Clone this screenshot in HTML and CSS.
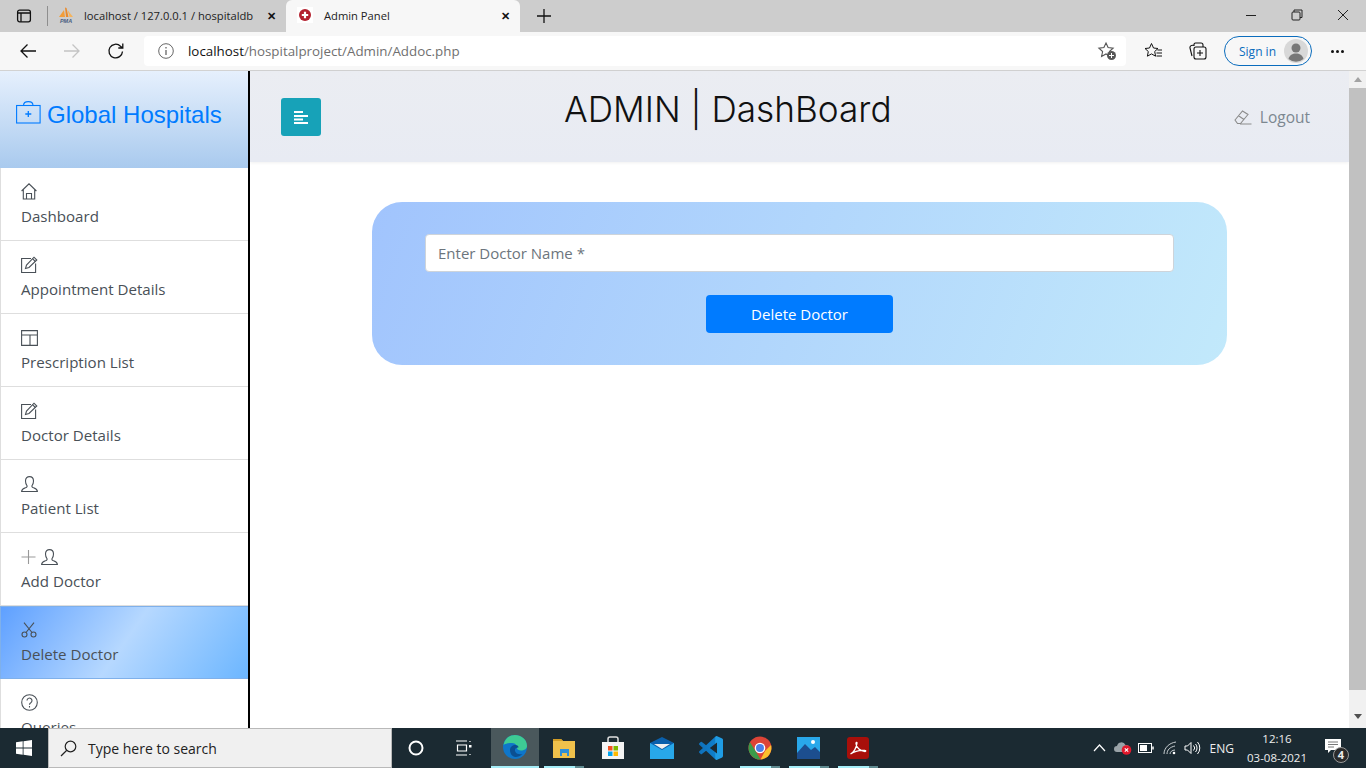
FILE: index.html
```html
<!DOCTYPE html>
<html lang="en">
<head>
    <meta charset="UTF-8">
    <title>Admin Panel</title>
    <link rel="stylesheet" href="styles.css">
</head>
<body>
    <!-- browser chrome -->
    <div class="tabstrip">
        <div class="tab-tool">
            <svg width="16" height="16" viewBox="0 0 16 16" fill="none" stroke="#111" stroke-width="1.3"><rect x="1.6" y="2.2" width="12.8" height="11.6" rx="2"/><path d="M1.6 5h12.8M5 5v8.8" /></svg>
        </div>
        <div class="tab-sep"></div>
        <div class="tab">
            <svg class="tab-icon" width="16" height="16" viewBox="0 0 16 16"><path d="M1 10 L6 3 L7 10z" fill="#f29d38"/><path d="M7 0.500 L8 10 L10.500 10 L8.500 1z" fill="#e98a2b"/><path d="M9.500 3 L15 10 L11.500 10z" fill="#f5b45c"/><text x="8" y="15.500" class="pma-mark">PMA</text></svg>
            <span class="tab-title">localhost / 127.0.0.1 / hospitaldb</span>
            <span class="tab-close">&#10005;</span>
        </div>
        <div class="tab tab-active">
            <svg class="tab-icon" width="16" height="16" viewBox="0 0 16 16"><rect width="16" height="16" fill="#fff"/><circle cx="8" cy="8" r="6" fill="#b3202f"/><path d="M8 4.800v6.400M4.800 8h6.400" stroke="#fff" stroke-width="2.200"/></svg>
            <span class="tab-title">Admin Panel</span>
            <span class="tab-close">&#10005;</span>
        </div>
        <div class="new-tab">
            <svg width="16" height="16" viewBox="0 0 16 16" stroke="#111" stroke-width="1.3"><path d="M8 1v14M1 8h14"/></svg>
        </div>
        <div class="win-controls">
            <div class="win-btn"><svg width="12" height="12" viewBox="0 0 12 12" stroke="#222"><path d="M1 6.500h10"/></svg></div>
            <div class="win-btn"><svg width="12" height="12" viewBox="0 0 12 12" fill="none" stroke="#222"><path d="M3 3V1h8v7.500H9"/><rect x="1" y="3" width="8" height="8" rx="1"/></svg></div>
            <div class="win-btn"><svg width="12" height="12" viewBox="0 0 12 12" stroke="#222"><path d="M1 1l10 10M11 1L1 11"/></svg></div>
        </div>
    </div>

    <div class="toolbar">
        <div class="nav-btn"><svg width="18" height="18" viewBox="0 0 18 18" fill="none" stroke="#111" stroke-width="1.3"><path d="M17 9H2M8.500 2.500L2 9l6.500 6.500"/></svg></div>
        <div class="nav-btn"><svg width="18" height="18" viewBox="0 0 18 18" fill="none" stroke="#c4c4c4" stroke-width="1.3"><path d="M1 9h15M9.500 2.500L16 9l-6.500 6.500"/></svg></div>
        <div class="nav-btn"><svg width="18" height="18" viewBox="0 0 18 18" fill="none" stroke="#111" stroke-width="1.3"><path d="M15.500 9.500a6.800 6.800 0 1 1-2-5.300L15.500 6M15.800 1.500V6h-4.500"/></svg></div>
        <div class="address">
            <svg width="16" height="16" viewBox="0 0 16 16" fill="none" stroke="#666"><circle cx="8" cy="8" r="7.300"/><path d="M8 7v5M8 4v1.500" stroke-width="1.3"/></svg>
            <span class="url"><span class="url-host">localhost</span>/hospitalproject/Admin/Addoc.php</span>
            <svg class="addr-star" width="20" height="20" viewBox="0 0 20 20"><path d="M9 2l2.100 4.600 5 .6-3.700 3.300 1 4.900L9 13l-4.400 2.400 1-4.900L1.900 7.200l5-.6z" fill="none" stroke="#555" stroke-width="1.100"/><circle cx="14.500" cy="14.500" r="4.500" fill="#555"/><path d="M14.500 12v5M12 14.500h5" stroke="#fff"/></svg>
        </div>
        <div class="tool-icons">
            <svg width="20" height="20" viewBox="0 0 20 20" fill="none" stroke="#111"><path d="M7.500 2.500l2 4.500 4.500.5-3.300 3 .9 4.700-4.100-2.300-4.100 2.300.9-4.700L1 7.500 5.500 7z"/><path d="M13.500 9h4.500M12.500 12h5.500M12.500 15h5.500"/></svg>
            <svg width="20" height="20" viewBox="0 0 20 20" fill="none" stroke="#111" stroke-width="1.100"><path d="M6 5V3.500A1.500 1.500 0 0 1 7.500 2H13a2 2 0 0 1 2 2v2M4 15l-2-8A2 2 0 0 1 3.500 4.500L6 4"/><rect x="6" y="6" width="12" height="12" rx="2"/><path d="M12 9v6M9 12h6"/></svg>
        </div>
        <div class="signin">
            <span>Sign in</span>
            <svg width="24" height="24" viewBox="0 0 24 24"><circle cx="12" cy="12" r="12" fill="#d8d8d8"/><circle cx="12" cy="9" r="4.500" fill="#777"/><path d="M4.500 20c1-4 4-5.500 7.500-5.500s6.500 1.500 7.500 5.500a12 12 0 0 1-15 0z" fill="#777"/></svg>
        </div>
        <div class="more"><i></i><i></i><i></i></div>
    </div>

    <!-- the page itself -->
    <div class="viewport">
        <aside class="sidebar">
            <div class="brand">
                <svg width="25" height="23" viewBox="0 0 25 23" fill="none" stroke="#007bff" stroke-width="1.100"><rect x=".6" y="4.500" width="23.500" height="17.500"/><path d="M7.500 4.500C7.500 2 9.500.6 12.300.6S17 2 17 4.500"/><path d="M12.300 10v6M9.300 13h6" stroke-width="1.300"/></svg>
                <span>Global Hospitals</span>
            </div>
            <ul class="menu">
                <li class="menu-item">
                    <div class="menu-icons"><svg width="16" height="17" viewBox="0 0 16 17"><path d="M.6 8L8 .8 15.400 8M2.300 6.500V16h11.400V6.500M5.500 16V10.500h5V16"/></svg></div>
                    Dashboard
                </li>
                <li class="menu-item">
                    <div class="menu-icons"><svg width="17" height="17" viewBox="0 0 17 17"><path d="M10 2.500H.6v14h14V7.500"/><path d="M4.500 12.500l1-3.500L13 1.200l2.800 2.800L8 11.500z"/><path d="M11.500 2.700L14.300 5.500"/></svg></div>
                    Appointment Details
                </li>
                <li class="menu-item">
                    <div class="menu-icons"><svg width="17" height="16" viewBox="0 0 17 16"><path d="M.6.600h15.800v14.800H.6zM.6 5h15.800M9 5v10.400"/></svg></div>
                    Prescription List
                </li>
                <li class="menu-item">
                    <div class="menu-icons"><svg width="17" height="17" viewBox="0 0 17 17"><path d="M10 2.500H.6v14h14V7.500"/><path d="M4.500 12.500l1-3.500L13 1.200l2.800 2.800L8 11.500z"/><path d="M11.500 2.700L14.300 5.500"/></svg></div>
                    Doctor Details
                </li>
                <li class="menu-item">
                    <div class="menu-icons"><svg width="17" height="16" viewBox="0 0 17 16"><path d="M.6 15.500c0-2.500 2-3 4.500-4 1-.5 1.200-1.200.8-2C4.800 8 4.500 6.500 4.500 5c0-2.800 1.700-4.400 4-4.400s4 1.600 4 4.400c0 1.500-.3 3-1.400 4.500-.4.800-.2 1.500.8 2 2.500 1 4.500 1.500 4.500 4z"/></svg></div>
                    Patient List
                </li>
                <li class="menu-item">
                    <div class="menu-icons">
                        <svg width="15" height="16" viewBox="0 0 15 16"><path d="M7.500 1v14M.5 8h14" stroke="#999"/></svg>
                        <svg width="17" height="16" viewBox="0 0 17 16"><path d="M.6 15.500c0-2.500 2-3 4.500-4 1-.5 1.200-1.200.8-2C4.800 8 4.500 6.500 4.500 5c0-2.800 1.700-4.400 4-4.400s4 1.600 4 4.400c0 1.500-.3 3-1.400 4.500-.4.800-.2 1.500.8 2 2.500 1 4.500 1.500 4.500 4z"/></svg>
                    </div>
                    Add Doctor
                </li>
                <li class="menu-item menu-item-active">
                    <div class="menu-icons"><svg width="16" height="16" viewBox="0 0 16 16"><circle cx="3.500" cy="12.500" r="2.500"/><circle cx="12.500" cy="12.500" r="2.500"/><path d="M5 10.500L13 .6M11 10.500L3 .6"/></svg></div>
                    Delete Doctor
                </li>
                <li class="menu-item">
                    <div class="menu-icons"><svg width="17" height="17" viewBox="0 0 17 17"><circle cx="8.500" cy="8.500" r="7.800"/><path d="M6 6.500a2.500 2.500 0 1 1 3.800 2.200c-.9.500-1.300 1-1.300 2M8.500 12v1.500"/></svg></div>
                    Queries
                </li>
            </ul>
        </aside>

        <main class="content">
            <header class="topbar">
                <button class="menu-toggle" type="button">
                    <svg width="16" height="14" viewBox="0 0 16 14" fill="#fff"><rect x="1" y="1" width="9" height="2"/><rect x="1" y="5" width="14" height="2"/><rect x="1" y="8.500" width="9" height="2"/><rect x="1" y="12" width="14" height="2"/></svg>
                </button>
                <h1 class="page-title">ADMIN | DashBoard</h1>
                <a class="logout">
                    <svg width="18" height="15" viewBox="0 0 18 15" fill="none" stroke="#8b8b8b" stroke-width="1.100"><path d="M1 10l7.500-9L14 4.500 6.500 13.500H3.500zM4.500 5.800L10 9.500M6 14h11.500"/></svg>
                    Logout
                </a>
            </header>

            <form class="delete-card">
                <input class="name-input" type="text" placeholder="Enter Doctor Name *">
                <button class="delete-btn" type="button">Delete Doctor</button>
            </form>
        </main>

        <div class="scrollbar">
            <div class="arrow-up"></div>
            <div class="thumb"></div>
            <div class="arrow-down"></div>
        </div>
    </div>

    <!-- windows taskbar -->
    <div class="taskbar">
        <div class="start">
            <svg width="16" height="16" viewBox="0 0 16 16" fill="#fff"><path d="M0 2.300l6.700-1v6.300H0zM7.500 1.200L16 0v7.600H7.500zM0 8.400h6.700v6.300l-6.700-1zM7.500 8.400H16V16l-8.500-1.200z"/></svg>
        </div>
        <div class="search">
            <svg width="17" height="17" viewBox="0 0 17 17" fill="none" stroke="#222" stroke-width="1.200"><circle cx="10.500" cy="6.500" r="5.300"/><path d="M6.800 10.300L1 16"/></svg>
            <span>Type here to search</span>
        </div>
        <div class="task-cell task-cortana">
            <svg width="16" height="16" viewBox="0 0 16 16" fill="none" stroke="#fff" stroke-width="2"><circle cx="8" cy="8" r="6.500"/></svg>
        </div>
        <div class="task-cell task-view">
            <svg width="17" height="16" viewBox="0 0 17 16" fill="none" stroke="#fff" stroke-width="1.200"><path d="M1 1h11M1 15h11M2.500 5h9v6h-9zM15 1v1M15 14v1"/><rect x="14" y="5" width="2.500" height="2.500" fill="#fff" stroke="none"/></svg>
        </div>
        <div class="task-cell task-cell-active">
            <svg width="26" height="26" viewBox="0 0 26 26"><circle cx="13" cy="13" r="12" fill="#0f76c9"/><path d="M1.500 11C3 4 8 1 13 1c6 0 12 4 12 11 0 3-3 4.500-6 4.500-2.500 0-4-1-4-2.500 0-2-1-5-5-5-4 0-7 1-8.500 2z" fill="#3ecb94"/><path d="M8 16c0-3 2.500-5 5.500-5 2 0 3 1 3 2.500-2 0-4 1-3.500 3.500.5 2.500 4 4 7.500 3-2 2-4.500 3-7 3-3.500 0-5.500-4-5.500-7z" fill="#0b4f92"/></svg>
        </div>
        <div class="task-cell task-cell-open">
            <svg width="24" height="22" viewBox="0 0 24 22"><path d="M1 2h8l2 2h12v17H1z" fill="#f0c14b"/><path d="M1 2h8l2 2H1z" fill="#d29c25"/><rect x="8" y="12" width="9" height="7" fill="#2f8fd8"/><rect x="10" y="16" width="5" height="5" fill="#f0c14b"/></svg>
        </div>
        <div class="task-cell">
            <svg width="24" height="24" viewBox="0 0 24 24"><path d="M7 7V3a2 2 0 0 1 2-2h6a2 2 0 0 1 2 2v4" fill="none" stroke="#e0e0e0" stroke-width="1.500"/><rect x="1" y="6" width="22" height="17" fill="#f4f4f4"/><rect x="7" y="10" width="4.500" height="4.500" fill="#f25022"/><rect x="12.500" y="10" width="4.500" height="4.500" fill="#7fba00"/><rect x="7" y="15.500" width="4.500" height="4.500" fill="#00a4ef"/><rect x="12.500" y="15.500" width="4.500" height="4.500" fill="#ffb900"/></svg>
        </div>
        <div class="task-cell">
            <svg width="24" height="22" viewBox="0 0 24 22"><rect y="6" width="24" height="16" fill="#28a8ea"/><path d="M0 6L12 0l12 6-12 7z" fill="#0a5fab"/><path d="M4 7h16l-8 5z" fill="#f0f0f0"/></svg>
        </div>
        <div class="task-cell">
            <svg width="24" height="24" viewBox="0 0 24 24"><defs><linearGradient id="vsblue" x1="0" x2="1"><stop offset="0" stop-color="#0f6fb8"/><stop offset=".65" stop-color="#0f7fcc"/><stop offset=".7" stop-color="#1f9ce4"/></linearGradient></defs><path fill="url(#vsblue)" d="M23.150 2.587L18.210.21a1.494 1.494 0 0 0-1.705.29l-9.460 8.630-4.120-3.128a.999.999 0 0 0-1.276.057L.327 7.261A1 1 0 0 0 .326 8.740L3.899 12 .326 15.260a1 1 0 0 0 .001 1.479L1.650 17.940a.999.999 0 0 0 1.276.057l4.120-3.128 9.460 8.630a1.492 1.492 0 0 0 1.704.29l4.942-2.377A1.500 1.500 0 0 0 24 20.060V3.939a1.500 1.500 0 0 0-.85-1.352zm-5.146 14.861L10.826 12l7.178-5.448v10.896z"/></svg>
        </div>
        <div class="task-cell task-cell-open">
            <svg width="24" height="24" viewBox="0 0 24 24"><circle cx="12" cy="12" r="11.500" fill="#dc4437"/><path d="M12 23.500A11.500 11.500 0 0 1 2 6.300L7.500 15l5 8.500z" fill="#3a9c4a"/><path d="M23 9a11.500 11.500 0 0 1-10.500 14.500L17 15l6-6z" fill="#fbc02d"/><circle cx="12" cy="12" r="5.300" fill="#fff"/><circle cx="12" cy="12" r="4" fill="#4c7fe8"/></svg>
        </div>
        <div class="task-cell task-cell-open">
            <svg width="23" height="22" viewBox="0 0 23 22"><rect width="23" height="22" fill="#29a8ea"/><path d="M0 16l8-9 6 6 4-3 5 5v7H0z" fill="#1c4e8f"/><circle cx="16" cy="5" r="2" fill="#fff"/></svg>
        </div>
        <div class="task-cell task-cell-open">
            <svg width="22" height="22" viewBox="0 0 22 22"><rect width="22" height="22" rx="3" fill="#a80f0a"/><path d="M3.500 17c3-1.500 6-6 6.500-11 0-1-1-1-1 .5 0 3.500 4 8 9 8 1 0 1-1 0-1-4-.5-10 .5-14.500 3.500z" fill="none" stroke="#fff" stroke-width="1.300"/></svg>
        </div>
        <div class="tray">
            <svg class="tray-chevron" width="13" height="8" viewBox="0 0 13 8" fill="none" stroke="#fff" stroke-width="1.200"><path d="M1 7l5.500-6L12 7"/></svg>
            <svg class="tray-cloud" width="18" height="14" viewBox="0 0 18 14"><path d="M3 11a3 3 0 0 1 0-6 4.500 4.500 0 0 1 8.500-1 3.500 3.500 0 0 1 1 7z" fill="#9aa3a8"/><circle cx="12.500" cy="9" r="4.800" fill="#e2192c"/><path d="M10.800 7.300l3.400 3.400M14.200 7.300l-3.400 3.400" stroke="#fff" stroke-width="1.100"/></svg>
            <svg class="tray-battery" width="16" height="10" viewBox="0 0 16 10" fill="none" stroke="#fff"><rect x=".5" y=".5" width="13" height="9"/><rect x="2" y="2" width="7" height="6" fill="#fff" stroke="none"/><path d="M15 3.500v3" stroke-width="1.500"/></svg>
            <svg class="tray-wifi" width="14" height="14" viewBox="0 0 14 14" fill="none" stroke="#c9cfd2"><path d="M1 13C1 7 6 2 13 1M4 13c0-4 3-7 8-8M7 13c0-2 2-4 5-4"/><circle cx="11" cy="12" r="1.300" fill="#fff" stroke="none"/></svg>
            <svg class="tray-speaker" width="17" height="14" viewBox="0 0 17 14" fill="none" stroke="#fff"><path d="M1 5h2.500L7 1.500v11L3.500 9H1zM9.500 4.500a3.500 3.500 0 0 1 0 5M11.500 3a6 6 0 0 1 0 8M13.500 1a9 9 0 0 1 0 12"/></svg>
            <span class="tray-lang">ENG</span>
            <div class="clock"><span>12:16</span><span>03-08-2021</span></div>
            <div class="notify">
                <svg width="16" height="14" viewBox="0 0 16 14"><path d="M0 0h16v11H6l-3 3v-3H0z" fill="#fff"/><path d="M3 3h10M3 5.500h10M3 8h6" stroke="#555" stroke-width=".8"/></svg>
                <span class="notify-badge">4</span>
            </div>
        </div>
    </div>
</body>
</html>
```
FILE: styles.css
```css
* {
    margin: 0;
    padding: 0;
    box-sizing: border-box;
}

html, body {
    height: 100%;
    overflow: hidden;
}

body {
    display: flex;
    flex-direction: column;
    background-color: #fff;
    font-family: 'Open Sans', 'Noto Sans', sans-serif;
}

/* browser tabs */
.tabstrip {
    height: 32px;
    display: flex;
    align-items: flex-end;
    background-color: #cdcdcd;
    flex-shrink: 0;
}

.tab-tool {
    width: 47px;
    height: 32px;
    display: flex;
    align-items: center;
    padding-left: 16px;
}

.tab-sep {
    width: 1px;
    height: 20px;
    margin-bottom: 6px;
    background-color: #8e8e8e;
}

.tab {
    width: 238px;
    height: 32px;
    display: flex;
    align-items: center;
    padding: 0 9px 2px 10px;
    font-size: 11.2px;
    color: #222;
}

.tab-active {
    width: 234px;
    background-color: #f7f7f7;
    border-radius: 6px 6px 0 0;
    padding-left: 11px;
}

.tab-icon {
    flex-shrink: 0;
    margin-right: 10px;
}

.pma-mark {
    font-family: 'Liberation Sans', Arial, sans-serif;
    font-size: 5.5px;
    font-weight: 700;
    font-style: italic;
    text-anchor: middle;
    fill: #4a5d80;
}

.tab-title {
    flex: 1;
    white-space: nowrap;
}

.tab-active .tab-title {
    padding-left: 1px;
}

.tab-close {
    width: 12px;
    font-size: 11px;
    font-weight: 600;
    color: #111;
    text-align: center;
}

.new-tab {
    width: 48px;
    height: 32px;
    display: flex;
    align-items: center;
    justify-content: center;
}

.win-controls {
    margin-left: auto;
    display: flex;
}

.win-btn {
    width: 46px;
    height: 30px;
    display: flex;
    align-items: center;
    justify-content: center;
    margin-bottom: 2px;
}

/* address bar row */
.toolbar {
    height: 39px;
    display: flex;
    align-items: center;
    background-color: #f7f7f7;
    border-bottom: 1px solid #d2d2d2;
    padding-left: 6px;
    flex-shrink: 0;
}

.nav-btn {
    width: 44px;
    height: 30px;
    display: flex;
    align-items: center;
    justify-content: center;
}

.address {
    width: 982px;
    height: 30px;
    margin-left: 6px;
    display: flex;
    align-items: center;
    background-color: #fff;
    border-radius: 4px;
    padding: 0 9px 0 14px;
}

.url {
    margin-left: 14px;
    font-size: 13.35px;
    color: #6f6f6f;
}

.url-host {
    color: #111;
}

.addr-star {
    margin-left: auto;
}

.tool-icons {
    display: flex;
    gap: 24px;
    margin-left: 18px;
}

.signin {
    width: 88px;
    height: 30px;
    margin-left: 16px;
    display: flex;
    align-items: center;
    justify-content: space-between;
    padding: 0 3px 0 14px;
    border: 1px solid #0a6cbd;
    border-radius: 15px;
    font-size: 12px;
    color: #0a6cbd;
}

.more {
    display: flex;
    gap: 2px;
    margin-left: 19px;
}

.more i {
    width: 3px;
    height: 3px;
    border-radius: 50%;
    background-color: #111;
}

/* page */
.viewport {
    flex: 1;
    min-height: 0;
    display: flex;
}

.sidebar {
    width: 250px;
    flex-shrink: 0;
    border-right: 2px solid #000;
    overflow: hidden;
    background-color: #fff;
}

.brand {
    height: 97px;
    display: flex;
    align-items: flex-start;
    gap: 6px;
    padding: 29px 0 0 16px;
    background: linear-gradient(#e6f0fd, #a9caee);
    color: #007bff;
    font-family: 'Liberation Sans', Arial, sans-serif;
    font-size: 24px;
    line-height: 30px;
}

.brand svg {
    margin-top: 1px;
}

.menu {
    list-style: none;
}

.menu-item {
    height: 73px;
    padding: 15px 0 0 20px;
    border: 1px solid #dedede;
    border-width: 0 0 1px 1px;
    font-size: 15.1px;
    line-height: 22px;
    color: #495057;
}

.menu-item-active {
    border-color: #7fb0ea;
    border-top: 1px solid #7fb0ea;
    padding-top: 14px;
    background: linear-gradient(125deg, #5ea0ff 0%, #b6d8ff 50%, #6cb6ff 100%);
}

.menu-icons {
    height: 17px;
    display: flex;
    align-items: center;
    gap: 5px;
    margin-bottom: 5px;
}

.menu-icons svg {
    fill: none;
    stroke: #495057;
    stroke-width: 1.100;
}

.content {
    flex: 1;
    min-width: 0;
}

.topbar {
    height: 91px;
    display: flex;
    align-items: flex-start;
    padding: 27px 39px 0 31px;
    background: linear-gradient(#ebedf2, #e8ebf3);
    box-shadow: 0 1px 3px rgba(0, 0, 0, 0.06);
}

.menu-toggle {
    width: 40px;
    height: 38px;
    display: flex;
    align-items: center;
    justify-content: center;
    border: none;
    border-radius: 3px;
    background-color: #17a2b8;
}

.page-title {
    width: 328px;
    margin: -11px 0 0 243px;
    font-family: 'Inter', sans-serif;
    font-size: 35.2px;
    font-weight: 300;
    line-height: 44px;
    white-space: nowrap;
    color: #111;
}

.logout {
    margin-left: auto;
    margin-top: 8px;
    display: flex;
    align-items: center;
    gap: 8px;
    font-size: 15.500px;
    color: #7c8790;
}

.delete-card {
    width: 855px;
    height: 163px;
    margin: 40px 0 0 122px;
    padding: 32px 53px 0;
    display: flex;
    flex-direction: column;
    align-items: center;
    border-radius: 30px;
    background: linear-gradient(110deg, #a1c4fd 0%, #c2e9fb 100%);
}

.name-input {
    width: 100%;
    height: 38px;
    padding: 0 12px;
    border: 1px solid #ced4da;
    border-radius: 4px;
    background-color: #fff;
    font-family: inherit;
    font-size: 15px;
    outline: none;
}

.name-input::placeholder {
    color: #6c757d;
    opacity: 1;
}

.delete-btn {
    width: 187px;
    height: 38px;
    margin-top: 23px;
    border: none;
    border-radius: 4px;
    background-color: #007bff;
    color: #fff;
    font-family: inherit;
    font-size: 15px;
}

.scrollbar {
    width: 17px;
    flex-shrink: 0;
    display: flex;
    flex-direction: column;
    align-items: center;
    background-color: #f1f1f1;
}

.arrow-up {
    margin-top: 6px;
    border: 4px solid transparent;
    border-top: 0;
    border-bottom: 5px solid #a3a3a3;
}

.thumb {
    width: 100%;
    height: 602px;
    margin-top: 6px;
    background-color: #c1c1c1;
}

.arrow-down {
    margin-top: 24px;
    border: 4px solid transparent;
    border-bottom: 0;
    border-top: 5px solid #505050;
}

/* taskbar */
.taskbar {
    height: 40px;
    flex-shrink: 0;
    display: flex;
    background-color: #1b2a32;
    color: #fff;
}

.start {
    width: 48px;
    display: flex;
    align-items: center;
    justify-content: center;
}

.search {
    width: 344px;
    display: flex;
    align-items: center;
    gap: 11px;
    padding-left: 11px;
    background-color: #f0f0f0;
    border: 1px solid #b9b9b9;
    font-size: 14px;
    color: #222;
}

.task-cell {
    position: relative;
    width: 49px;
    display: flex;
    align-items: center;
    justify-content: center;
}

.task-cortana {
    width: 48px;
}

.task-view {
    width: 51px;
    padding-right: 5px;
}

.task-cell-active {
    width: 48px;
    background-color: #4a585c;
    border-bottom: 2px solid #a5edf7;
}

.task-cell-open::after {
    content: '';
    position: absolute;
    left: 5px;
    right: 4px;
    bottom: 0;
    height: 2px;
    background: linear-gradient(90deg, #a5edf7 77%, #5f8a90 77%);
}

.tray {
    margin-left: auto;
    display: flex;
    align-items: center;
    font-size: 12px;
    color: #eee;
}

.tray-chevron {
    margin-right: 8px;
}

.tray-cloud {
    margin-right: 6px;
}

.tray-battery {
    margin-right: 9px;
}

.tray-wifi {
    margin-right: 7px;
}

.tray-speaker {
    margin-right: 9px;
}

.tray-lang {
    margin-right: 13px;
}

.clock {
    display: flex;
    flex-direction: column;
    align-items: center;
    font-size: 11.500px;
    line-height: 19px;
    margin-right: 18px;
}

.notify {
    position: relative;
    width: 41px;
    height: 40px;
    padding-top: 11px;
}

.notify-badge {
    position: absolute;
    left: 8px;
    top: 19px;
    width: 16px;
    height: 16px;
    border-radius: 50%;
    border: 1px solid #999;
    background-color: #2a2a2a;
    font-size: 11px;
    font-weight: 700;
    line-height: 14px;
    text-align: center;
}
```
